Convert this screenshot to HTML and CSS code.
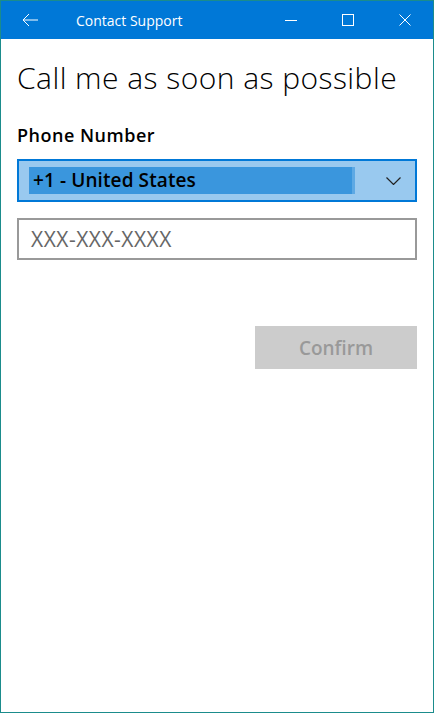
FILE: index.html
```html
<!DOCTYPE html>
<html lang="en">
<head>
    <meta charset="UTF-8">
    <meta name="viewport" content="width=device-width, initial-scale=1.0">
    <title>Contact Support</title>
    <link rel="stylesheet" href="styles.css">
</head>
<body>
    <div class="window">
        <div class="titlebar">
            <span class="back">
                <svg width="16" height="14" viewBox="0 0 16 14"><path d="M7 1 L1 7 L7 13 M1 7 H16" fill="none" stroke="#fff" stroke-width="1"/></svg>
            </span>
            <span class="title">Contact Support</span>
            <div class="controls">
                <span class="ctrl"><svg width="12" height="12" viewBox="0 0 12 12"><path d="M0 6.5 H12" stroke="#fff" stroke-width="1"/></svg></span>
                <span class="ctrl"><svg width="12" height="12" viewBox="0 0 12 12"><rect x="0.5" y="0.5" width="11" height="11" fill="none" stroke="#fff" stroke-width="1"/></svg></span>
                <span class="ctrl"><svg width="12" height="12" viewBox="0 0 12 12"><path d="M0.5 0.5 L11.5 11.5 M11.5 0.5 L0.5 11.5" stroke="#fff" stroke-width="1"/></svg></span>
            </div>
        </div>

        <div class="content">
            <h1>Call me as soon as possible</h1>

            <label class="field-label">Phone Number</label>
            <div class="dropdown">
                <span class="selected">+1 - United States</span>
                <svg class="chevron" width="15" height="8" viewBox="0 0 15 8"><path d="M0.5 0.5 L7.5 7.5 L14.5 0.5" fill="none" stroke="#222" stroke-width="1.2"/></svg>
            </div>

            <div class="phone-input">XXX-XXX-XXXX</div>

            <div class="actions">
                <button class="confirm" disabled>Confirm</button>
            </div>
        </div>
    </div>
</body>
</html>
```

FILE: styles.css
```css
body {
    margin: 0;
    font-family: "Open Sans", "Noto Sans", sans-serif;
    background-color: #fff;
}
.window {
    height: 713px;
    box-sizing: border-box;
    border: 1px solid #1b8c8c;
    display: flex;
    flex-direction: column;
}
.titlebar {
    height: 38px;
    background-color: #0078d7;
    color: #fff;
    display: flex;
    align-items: center;
}
.back {
    width: 58px;
    padding-left: 21px;
    box-sizing: border-box;
    display: flex;
    align-items: center;
}
.title {
    margin-left: 17px;
    font-size: 14px;
    flex: 1;
}
.controls {
    display: flex;
}
.ctrl {
    width: 57px;
    display: flex;
    justify-content: center;
    align-items: center;
}
.content {
    padding: 0 16px;
}
h1 {
    font-weight: 300;
    font-size: 30px;
    line-height: 41px;
    margin: 18px 0 0 0;
    color: #000;
    letter-spacing: 0.45px;
}
.field-label {
    display: block;
    font-weight: 600;
    font-size: 18px;
    line-height: 25px;
    margin-top: 25px;
    color: #000;
    letter-spacing: 0.5px;
}
.dropdown {
    margin-top: 11px;
    height: 43px;
    box-sizing: border-box;
    border: 2px solid #0078d7;
    background-color: #99c9ef;
    display: flex;
    align-items: center;
    padding: 0 14px 0 10px;
}
.selected {
    width: 326px;
    height: 27px;
    background-color: #3a96dd;
    box-shadow: inset -3px 0 0 #5da9e4;
    font-weight: 600;
    font-size: 19px;
    line-height: 27px;
    padding-left: 4px;
    box-sizing: border-box;
    color: #000;
    flex: none;
    letter-spacing: 0.1px;
}
.chevron {
    margin-left: auto;
}
.phone-input {
    margin-top: 16px;
    height: 42px;
    box-sizing: border-box;
    border: 2px solid #999;
    font-size: 21px;
    color: #666;
    display: flex;
    align-items: center;
    padding-left: 12px;
    letter-spacing: 0.5px;
}
.actions {
    display: flex;
    justify-content: flex-end;
    margin-top: 66px;
}
.confirm {
    width: 162px;
    height: 43px;
    border: none;
    background-color: #ccc;
    color: #999;
    font-family: inherit;
    font-weight: 600;
    font-size: 19px;
}
```
